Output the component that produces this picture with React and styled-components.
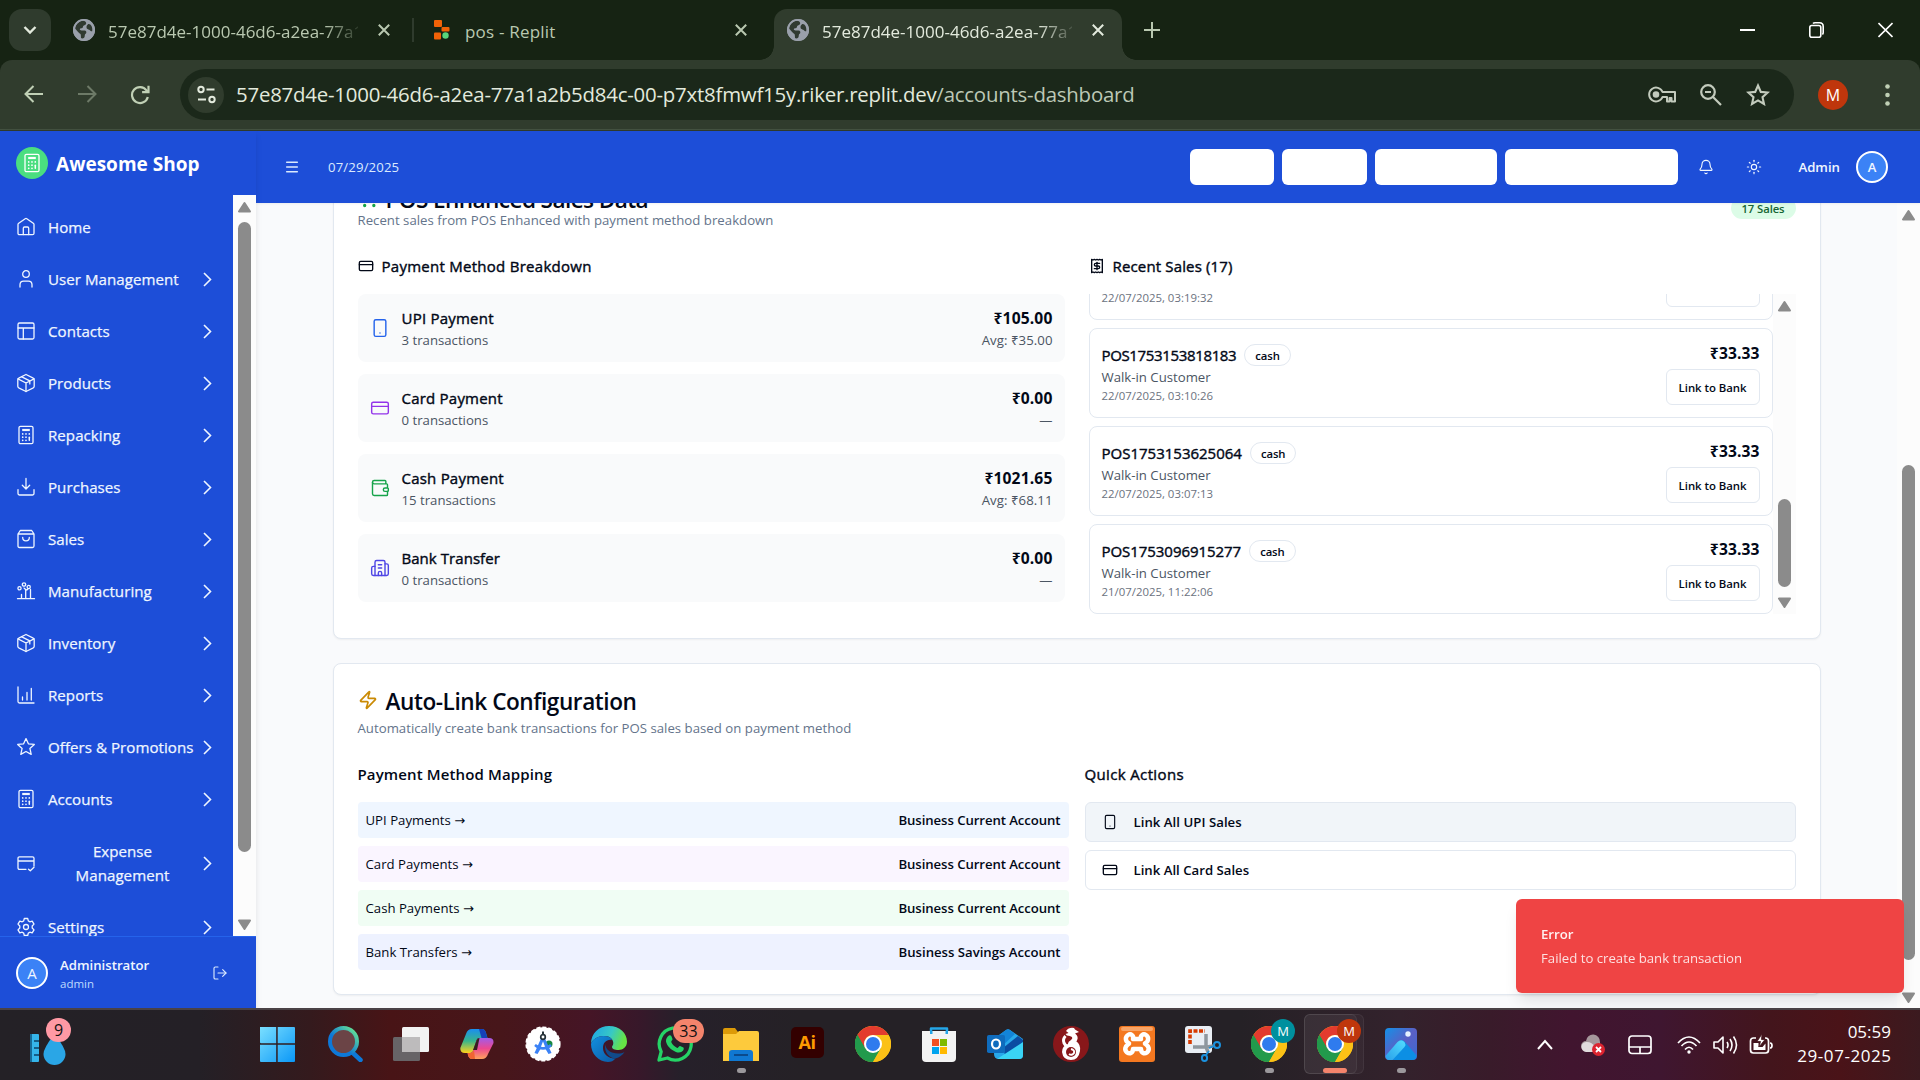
import React from "react";
import styled, { createGlobalStyle } from "styled-components";
import {
  Bell, Sun, Menu, CreditCard, Smartphone, Wallet, Building2, Zap, Receipt, ShoppingCart, LogOut,
} from "lucide-react";

const Global = createGlobalStyle`
  * { box-sizing: border-box; }
  html, body { margin: 0; padding: 0; overflow: hidden; }
  body { font-family: "Open Sans", "Noto Sans", sans-serif; color: #020817; }
  svg { display: block; flex: none; }
`;

const Screen = styled.div`
  width: 1920px;
  height: 1080px;
  display: flex;
  flex-direction: column;
  overflow: hidden;
`;

/* Weight 500 is drawn as the regular face with a thin stroke, since the family has no medium cut. */
const Text = styled.span`
  display: block;
  white-space: nowrap;
  font-size: ${(p) => p.$size || 13.2}px;
  line-height: ${(p) => p.$lh || 20}px;
  font-weight: ${(p) => (p.$weight === 500 ? 400 : p.$weight || 400)};
  -webkit-text-stroke: ${(p) => (p.$weight === 500 ? "0.4px currentColor" : "0")};
  color: ${(p) => p.$color || "#020817"};
  letter-spacing: ${(p) => (p.$ls !== undefined ? p.$ls : p.$weight === 500 ? 0.22 : 0)}px;
  margin-top: ${(p) => p.$dy || 0}px;
  margin-bottom: ${(p) => -(p.$dy || 0)}px;
`;

/* ---------- browser chrome ---------- */

const TabStrip = styled.div`
  height: 60px;
  flex: none;
  background: #162313;
  display: flex;
  align-items: center;
  padding-left: 9px;
`;

const TabSearch = styled.div`
  width: 42px;
  height: 42px;
  border-radius: 13px;
  background: #2f3b2d;
  display: grid;
  place-items: center;
`;

const Tab = styled.div`
  width: ${(p) => p.$width}px;
  height: 51px;
  margin-top: 9px;
  margin-left: ${(p) => p.$gap || 0}px;
  padding: 0 ${(p) => p.$end || 14}px 9px 13px;
  display: flex;
  align-items: center;
  border-radius: 13px 13px 0 0;
  background: ${(p) => (p.$active ? "#303c2d" : "transparent")};
  position: relative;
  color: ${(p) => (p.$active ? "#e3eadd" : "#b9c8b0")};
  ${(p) =>
    p.$active &&
    `&::before, &::after {
      content: "";
      position: absolute;
      bottom: 0;
      width: 14px;
      height: 14px;
    }
    &::before { left: -14px; background: radial-gradient(circle at 0 0, transparent 13.5px, #303c2d 14px); }
    &::after { right: -14px; background: radial-gradient(circle at 100% 0, transparent 13.5px, #303c2d 14px); }`}
`;

const TabTitle = styled.div`
  width: ${(p) => p.$width || 250}px;
  margin: 3px auto 0 ${(p) => p.$left || 13}px;
  overflow: hidden;
  white-space: nowrap;
  font-size: 17px;
  line-height: 24px;
  letter-spacing: ${(p) => p.$ls || 0}px;
  ${(p) => p.$fade && "mask-image: linear-gradient(90deg, #000 216px, transparent 256px);"}
`;

const TabDivider = styled.div`
  width: 2px;
  height: 24px;
  margin-left: 8px;
  background: #2f3b2d;
`;

const NewTab = styled.div`
  margin-left: 22px;
  flex: 1;
`;

const WindowButtons = styled.div`
  display: flex;
  gap: 54px;
  padding-right: 27px;
`;

const Toolbar = styled.div`
  height: 71px;
  flex: none;
  background: #303c2d;
  border-bottom: 1px solid #303a2c;
  box-shadow: inset 0 -1px 0 #435140;
  display: flex;
  align-items: center;
  padding: 0 24px 1px 22px;
`;

const ToolbarShell = styled.div`
  background: #162313;
  & > div { border-radius: 12px 12px 0 0; }
`;

const NavButtons = styled.div`
  display: flex;
  gap: 30px;
  width: 158px;
`;

const UrlBar = styled.div`
  width: 1614px;
  height: 51px;
  border-radius: 26px;
  background: #1b281a;
  display: flex;
  align-items: center;
  padding: 0 24px 0 8px;
`;

const SiteInfo = styled.div`
  width: 36px;
  height: 36px;
  border-radius: 50%;
  background: #303c2d;
  display: grid;
  place-items: center;
`;

const Url = styled.div`
  flex: 1;
  margin: -2px 0 0 12px;
  font-size: 20.4px;
  line-height: 28px;
  white-space: nowrap;
  letter-spacing: -0.21px;
  color: #e3eadd;
  & > span { color: #bdc8b6; }
`;

const UrlIcons = styled.div`
  display: flex;
  align-items: center;
  gap: 24px;
`;

const Profile = styled.div`
  width: 30px;
  height: 30px;
  margin: 0 37px 0 24px;
  border-radius: 50%;
  background: #bf360c;
  color: #fff;
  font-size: 16px;
  line-height: 30px;
  text-align: center;
`;

/* ---------- app shell ---------- */

const AppArea = styled.div`
  height: 877px;
  flex: none;
  display: flex;
  background: #f9fafc;
`;

const Sidebar = styled.aside`
  width: 256px;
  flex: none;
  display: flex;
  flex-direction: column;
  background: #1d4ed8;
  position: relative;
  z-index: 1;
  box-shadow: 0 4px 6px rgba(0, 0, 0, 0.1);
`;

const Brand = styled.div`
  height: 64px;
  display: flex;
  align-items: center;
  gap: 8px;
  padding-left: 16px;
`;

const BrandMark = styled.div`
  width: 32px;
  height: 32px;
  border-radius: 50%;
  background: #4ade80;
  color: #fff;
  display: grid;
  place-items: center;
`;

const NavFrame = styled.div`
  height: 741px;
  display: flex;
  overflow: hidden;
`;

const NavList = styled.nav`
  width: 233px;
  padding-top: 8px;
  display: flex;
  flex-direction: column;
  gap: 4px;
`;

const NavRow = styled.div`
  height: ${(p) => (p.$tall ? 72 : 48)}px;
  flex: none;
  display: flex;
  align-items: center;
  padding: 0 16px;
  color: #eff6ff;
`;

const NavLabel = styled.span`
  flex: 1;
  margin-left: 12px;
  margin-right: -8px;
  padding-right: ${(p) => (p.$center ? 8 : 0)}px;
  font-size: 15.1px;
  line-height: 24px;
  -webkit-text-stroke: 0.25px currentColor;
  letter-spacing: 0.04px;
  white-space: ${(p) => (p.$center ? "pre-line" : "nowrap")};
  text-align: ${(p) => (p.$center ? "center" : "left")};
`;

const Chevron = styled.span`
  width: 20px;
  display: grid;
  place-items: center;
`;

const Track = styled.div`
  width: 23px;
  flex: none;
  padding: 6px 0 ${(p) => p.$bottom || 5}px;
  background: #fcfcfc;
  display: flex;
  flex-direction: column;
  align-items: center;
`;

const Thumb = styled.div`
  width: 13px;
  height: ${(p) => p.$height}px;
  margin-top: ${(p) => p.$top}px;
  margin-bottom: auto;
  border-radius: 7px;
  background: #8b8b8b;
`;

const Account = styled.div`
  height: 72px;
  display: flex;
  align-items: center;
  padding: 0 28px 0 16px;
  border-top: 1px solid #2563eb;
`;

const AccountName = styled.div`
  flex: 1;
  margin-left: 12px;
  padding-top: 1px;
`;

const Avatar = styled.div`
  width: 32px;
  height: 32px;
  border: 2px solid #fff;
  border-radius: 50%;
  background: #3b82f6;
  color: #eff6ff;
  font-size: ${(p) => p.$size || 13}px;
  font-weight: ${(p) => p.$weight || 600};
  line-height: 28px;
  text-align: center;
`;

const Body = styled.div`
  flex: 1;
  display: flex;
  flex-direction: column;
`;

const TopBar = styled.header`
  height: 72px;
  flex: none;
  background: #1d4ed8;
  display: flex;
  align-items: center;
  padding: 0 32px 0 28px;
  box-shadow: 0 1px 2px rgba(0, 0, 0, 0.06);
  position: relative;
`;

const TopLeft = styled.div`
  flex: 1;
  display: flex;
  align-items: center;
  gap: 28px;
`;

const Blanks = styled.div`
  display: flex;
  gap: 8px;
`;

const Blank = styled.div`
  width: ${(p) => p.$width}px;
  height: 36px;
  border-radius: 6px;
  background: #fff;
`;

const TopIcons = styled.div`
  display: flex;
  gap: 32px;
  margin: 0 36px 0 20px;
`;

const AdminName = styled(Text)`
  margin-right: 16px;
`;

const Scroller = styled.div`
  flex: 1;
  min-height: 0;
  display: flex;
`;

const Content = styled.main`
  width: 1641px;
  padding: 0 76.5px 13px;
  display: flex;
  flex-direction: column;
  justify-content: flex-end;
  gap: 24px;
  overflow: hidden;
`;

const Card = styled.section`
  flex: none;
  padding: 24px;
  border: 1px solid #e2e8f0;
  border-radius: 8px;
  background: #fff;
  box-shadow: 0 1px 2px rgba(0, 0, 0, 0.05);
`;

const CardHead = styled.div`
  display: flex;
  align-items: center;
  justify-content: space-between;
  margin-bottom: 24px;
`;

const CardTitle = styled.div`
  display: flex;
  align-items: center;
  gap: 8px;
  margin-bottom: ${(p) => p.$below || 0}px;
`;

const Pill = styled.span`
  height: 22px;
  padding: 0 ${(p) => (p.$outline ? 10 : 11)}px;
  border: ${(p) => (p.$outline ? "1px solid #e2e8f0" : "none")};
  border-radius: 11px;
  background: ${(p) => (p.$outline ? "#fff" : "#dcfce7")};
  color: ${(p) => (p.$outline ? "#020817" : "#166534")};
  font-size: 11.3px;
  font-weight: 600;
  line-height: ${(p) => (p.$outline ? 21 : 23)}px;
  letter-spacing: -0.1px;
`;

const Columns = styled.div`
  display: grid;
  grid-template-columns: 1fr 1fr;
  gap: ${(p) => p.$gap}px;
`;

const SubHead = styled.div`
  height: 24px;
  display: flex;
  align-items: center;
  gap: 8px;
  margin-bottom: 16px;
`;

const Stack = styled.div`
  display: flex;
  flex-direction: column;
  gap: ${(p) => p.$gap}px;
`;

const Method = styled.div`
  height: 68px;
  padding: 12px;
  border-radius: 8px;
  background: #f9fafb;
  display: flex;
  align-items: center;
  gap: 12px;
`;

const Grow = styled.div`
  flex: 1;
`;

const RightText = styled.div`
  display: flex;
  flex-direction: column;
  align-items: flex-end;
  gap: ${(p) => p.$gap || 0}px;
`;

const SalesFrame = styled.div`
  height: 320px;
  display: flex;
`;

const Sales = styled.div`
  flex: 1;
  height: 320px;
  overflow: hidden;
  display: flex;
  flex-direction: column;
  justify-content: flex-end;
  gap: 8px;
`;

const Sale = styled.div`
  height: 90px;
  flex: none;
  padding: 12px;
  border: 1px solid #e2e8f0;
  border-radius: 8px;
  display: flex;
  align-items: center;
  justify-content: space-between;
`;

const SaleName = styled.div`
  height: 24px;
  display: flex;
  align-items: center;
  gap: 8px;
`;

const BankButton = styled.div`
  width: 94px;
  height: 36px;
  border: 1px solid #e2e8f0;
  border-radius: 6px;
  display: flex;
  justify-content: center;
  padding-top: 9px;
`;

const MapRow = styled.div`
  height: 36px;
  padding: 0 8px;
  border-radius: 4px;
  background: ${(p) => p.$tint};
  display: flex;
  align-items: center;
  justify-content: space-between;
`;

const ArrowGlyph = styled.span`
  font-family: "DejaVu Sans", sans-serif;
  font-size: 13px;
  line-height: 1;
`;

const Action = styled.div`
  height: 40px;
  padding: 0 16px;
  border: 1px solid #e2e8f0;
  border-radius: 6px;
  background: ${(p) => (p.$hover ? "#f1f5f9" : "#fff")};
  display: flex;
  align-items: center;
  gap: 16px;
`;

const Toast = styled.div`
  position: fixed;
  left: 1516px;
  top: 899px;
  width: 388px;
  height: 94px;
  padding: 0 25px;
  display: flex;
  flex-direction: column;
  justify-content: center;
  gap: 4px;
  border-radius: 6px;
  background: #ef4444;
  box-shadow: 0 10px 15px -3px rgba(0, 0, 0, 0.1), 0 4px 6px -4px rgba(0, 0, 0, 0.1);
  z-index: 3;
`;

/* ---------- taskbar ---------- */

const Taskbar = styled.div`
  height: 72px;
  flex: none;
  position: relative;
  z-index: 4;
  border-top: 2px solid #4a4246;
  background: linear-gradient(90deg, #242126 0, #242026 200px, #341a1d 310px, #481416 390px, #47161a 500px,
    #451526 590px, #37182a 640px, #26202a 680px, #252126 800px, #252126 1240px, #33222c 1400px,
    #391b2a 1490px, #41152f 1570px, #3f1630 1660px, #43151c 1770px, #4a1318 1840px, #3b1a1f 1920px);
  display: flex;
  align-items: center;
`;

const Widget = styled.div`
  width: 244px;
  height: 70px;
  padding: 24px 0 0 30px;
`;

const TaskCell = styled.div`
  width: 66px;
  height: 70px;
  padding-top: 16px;
  display: flex;
  flex-direction: column;
  align-items: center;
  position: relative;
  &:nth-of-type(2) { margin-right: 2px; }
  &::after {
    content: "";
    position: absolute;
    bottom: 7px;
    width: ${(p) => (p.$state === "active" ? 24 : 9)}px;
    height: 5px;
    border-radius: 3px;
    background: ${(p) => (p.$state === "active" ? "#f4846c" : "#9b989c")};
    display: ${(p) => (p.$state ? "block" : "none")};
  }
  & > svg { position: relative; z-index: 1; }
`;

const ActiveTile = styled.div`
  position: absolute;
  top: 4px;
  left: 2px;
  width: ${(p) => p.$width}px;
  height: 60px;
  border-radius: 6px;
  background: rgba(255, 255, 255, 0.035);
  border: 1px solid rgba(255, 255, 255, 0.06);
`;

const Bubble = styled.div`
  position: absolute;
  z-index: 2;
  left: ${(p) => p.$left}px;
  top: ${(p) => p.$top}px;
  min-width: ${(p) => p.$width}px;
  height: 24px;
  border-radius: 12px;
  background: ${(p) => p.$bg};
  color: ${(p) => p.$color || "#111"};
  font-size: ${(p) => p.$size || 15}px;
  line-height: 24px;
  text-align: center;
`;

const Tray = styled.div`
  flex: 1;
  display: flex;
  align-items: center;
  padding-left: 103px;
`;

const Gap = styled.div`
  flex: none;
  margin-left: ${(p) => p.$left}px;
`;

const Clock = styled.div`
  margin-left: auto;
  margin-top: -2px;
  padding-right: 29px;
  text-align: right;
  color: #fff;
  font-size: 17px;
  line-height: 24px;
`;

const DateLine = styled.div`
  letter-spacing: 0.55px;
  margin-right: -0.5px;
`;

/* ---------- drawings ---------- */

const CloseX = ({ size = 12, w = 2 }) => (
  <svg width={size} height={size} viewBox="0 0 12 12" stroke="currentColor" strokeWidth={w} fill="none">
    <path d="M.8.8 11.2 11.2M11.2.8.8 11.2" />
  </svg>
);

const Globe = () => (
  <svg width="22" height="22" viewBox="0 0 22 22">
    <circle cx="11" cy="11" r="11" fill="#9aa0ab" />
    <path d="M10 1.8c2 .3 3 1 3.2 2.2.2 1.500-1.500 2-2.700 2.700-.8.6-.3 1.700-1.200 2.300-.8.500-2 .1-2.400 1-.3 1 .600 1.400 1.700 1.400h3.200c1.200.1 1.600 1.100 1.500 2.100 0 1-1.100 1.300-1.400 2.200-.3 1.200.100 2-.8 3.100-1.300 1.200-2.600.6-3.100.3l-.200-3.300c-.2-1.300-1.700-1.500-2.400-2.500C4.600 12 3 11 2.200 9.400 2.800 5.500 6 2.200 10 1.800z" fill="#303a31" />
    <path d="M15 5.200c1.400-.5 2.700.3 3.500 1.800.8 1.700 1 3.600.7 5.300-1.400.2-2-1-3-1.600-1.100-.7-2.200-.6-2.600-1.800-.3-1.400.3-3.100 1.400-3.700z" fill="#303a31" />
    <circle cx="11" cy="11" r="10.200" fill="none" stroke="#9aa0ab" strokeWidth="1.500" />
  </svg>
);

const line = { fill: "none", stroke: "currentColor", strokeWidth: 1.3, strokeLinecap: "round", strokeLinejoin: "round" };

const Calc = ({ size = 20 }) => (
  <svg width={size} height={size} viewBox="0 0 20 20" {...line}>
    <rect x="3" y="1.300" width="14" height="17.400" rx="1.500" />
    <path d="M6.200 5h7.600" strokeWidth="2.200" strokeLinecap="butt" />
    <path d="M6.700 8.900h0M10 8.900h0M13.300 8.900h0M6.700 12.200h0M10 12.200h0M6.700 15.300h0M10 15.300h0" strokeWidth="1.700" />
    <path d="M13.300 12.200v3.100" strokeWidth="1.500" />
  </svg>
);

const Box = () => (
  <svg width="20" height="20" viewBox="0 0 20 20" {...line}>
    <path d="M10 1.500 17.300 5.200q.9.500.9 1.500v6.600q0 1-.9 1.500L10 18.500l-7.300-3.700q-.9-.5-.9-1.500V6.700q0-1 .9-1.500z" />
    <path d="M2 5.800 10 10l8-4.200M10 10v8.500M5.800 3.800l8 4.100v3" />
  </svg>
);

const navIcons = {
  home: (
    <svg width="20" height="20" viewBox="0 0 20 20" {...line}>
      <path d="M2 7.600q0-.8.700-1.300L9.200 1.700q.8-.5 1.600 0l6.500 4.600q.7.500.7 1.300v8.600q0 1.500-1.500 1.500h-13Q2 17.700 2 16.200z" />
      <path d="M7.300 17.500v-6.200q0-1.300 1.200-1.300h3q1.200 0 1.200 1.300v6.200" />
    </svg>
  ),
  user: (
    <svg width="20" height="20" viewBox="0 0 20 20" {...line}>
      <circle cx="10" cy="5" r="3.300" />
      <path d="M4 18v-2.200q0-3.600 3.600-3.600h4.800q3.600 0 3.600 3.600V18" />
    </svg>
  ),
  layout: (
    <svg width="20" height="20" viewBox="0 0 20 20" {...line}>
      <rect x="2" y="2" width="16" height="16" rx="1.500" />
      <path d="M2 7h16M7.300 7v11" />
    </svg>
  ),
  box: <Box />,
  calc: <Calc />,
  download: (
    <svg width="20" height="20" viewBox="0 0 20 20" {...line}>
      <path d="M10 1.500v10.300M6.300 8.300l3.700 3.700 3.700-3.700M2 12.600v4q0 1.400 1.400 1.400h13.200q1.400 0 1.400-1.400v-4" />
    </svg>
  ),
  bag: (
    <svg width="20" height="20" viewBox="0 0 20 20" {...line}>
      <path d="M4.300 1.500h11.400L18 5v12q0 1.500-1.500 1.500h-13Q2 18.500 2 17V5zM2 5h16" />
      <path d="M6.700 8.500q0 3.300 3.300 3.300t3.300-3.300" />
    </svg>
  ),
  factory: (
    <svg width="20" height="20" viewBox="0 0 20 20" {...line}>
      <circle cx="3.500" cy="7.300" r="1.600" /><circle cx="8" cy="3.500" r="1.700" /><circle cx="12.700" cy="6" r="1.600" />
      <path d="M1.500 17.700h17M5.500 17.500v-4M9.700 17.500V9.500q0-1.500-1.700-2.500M14.500 17.500V8.500M9.700 9.500q1-1 2-1" />
    </svg>
  ),
  chart: (
    <svg width="20" height="20" viewBox="0 0 20 20" {...line}>
      <path d="M2 2v14.500Q2 18 3.500 18H18M6.500 15v-3M11 15V7.500M15.300 15V3.500" />
    </svg>
  ),
  star: (
    <svg width="20" height="20" viewBox="0 0 20 20" {...line}>
      <path d="m10 1.600 2.400 5.200 5.900.6-4.400 4 1.300 6-5.200-2.900-5.200 2.900 1.300-6-4.400-4 5.900-.6z" />
    </svg>
  ),
  expense: (
    <svg width="20" height="20" viewBox="0 0 20 20" {...line}>
      <path d="M10 16.300H3.500Q2 16.300 2 14.800V5.300q0-1.500 1.500-1.500h13q1.500 0 1.500 1.500V13M2 8h16M12.500 16.200l1.800 1.600 3.700-3.500" />
    </svg>
  ),
  gear: (
    <svg width="20" height="20" viewBox="0 0 20 20" {...line}>
      <path d="m8.300 1.500h3.400l.6 2.400 1.500.9 2.400-.7 1.800 3-1.800 1.900v2l1.800 1.900-1.800 3-2.400-.7-1.500.9-.6 2.400H8.300l-.6-2.400-1.500-.9-2.400.7-1.800-3 1.800-1.900V9L2 7.100l1.800-3 2.400.7 1.500-.9z" />
      <circle cx="10" cy="10" r="2.500" />
    </svg>
  ),
};

const Arrow = ({ down }) => (
  <svg width="15" height="12" viewBox="0 0 15 12">
    <path d={down ? "M2 1.500h11L7.500 10z" : "M2 10.500h11L7.500 2z"} fill="#8b8b8b" stroke="#8b8b8b" strokeWidth="2" strokeLinejoin="round" />
  </svg>
);

const ChromeLogo = () => (
  <svg width="36" height="36" viewBox="0 0 36 36">
    <circle cx="18" cy="18" r="18" fill="#fbc116" />
    <path d="M18 18 2.400 9a18 18 0 0 0 15.600 27l7.800-13.500z" fill="#229a4c" />
    <path d="M18 9h15.600A18 18 0 0 1 18 36l7.800-13.500z" fill="#fbc116" />
    <path d="M2.400 9A18 18 0 0 1 33.600 9H18a9 9 0 0 0-8.500 6l.7 7.500z" fill="#e33b2e" />
    <path d="M2.400 9 10.200 22.500 18 27l-2 8.900A18 18 0 0 1 2.400 9z" fill="#229a4c" />
    <circle cx="18" cy="18" r="9" fill="#fff" />
    <circle cx="18" cy="18" r="7" fill="#2f7bee" />
  </svg>
);

const taskIcons = {
  windows: (
    <svg width="36" height="36" viewBox="0 0 36 36">
      <defs><linearGradient id="win" x1="0" y1="0" x2="1" y2="1"><stop stopColor="#7adfff" /><stop offset="1" stopColor="#0a97f7" /></linearGradient></defs>
      <path d="M1 1h16.200v16.200H2q-1 0-1-1zM18.700 1H35q1 0 1 1v15.200H18.700zM1 18.800h16.200V36H2q-1 0-1-1zM18.700 18.800H36V35q0 1-1 1H18.700z" fill="url(#win)" />
    </svg>
  ),
  search: (
    <svg width="36" height="36" viewBox="0 0 36 36">
      <defs><linearGradient id="sr" x1="0" y1="1" x2="1" y2="0"><stop offset=".4" stopColor="#0d78d8" /><stop offset="1" stopColor="#6ff08c" /></linearGradient></defs>
      <path d="m26 27 7.500 7" stroke="#0d78d8" strokeWidth="4.500" strokeLinecap="round" />
      <circle cx="16.500" cy="15.500" r="13.500" fill="#6b4446" stroke="url(#sr)" strokeWidth="4" />
    </svg>
  ),
  taskview: (
    <svg width="36" height="36" viewBox="0 0 36 36">
      <rect x="0" y="11" width="27" height="24" rx="1.500" fill="#676467" />
      <rect x="9" y="1" width="27" height="25" rx="1.500" fill="#f2f2f2" />
      <path d="M9 11h18v15H9z" fill="#bdbbbc" />
    </svg>
  ),
  copilot: (
    <svg width="36" height="36" viewBox="0 0 36 36">
      <defs>
        <linearGradient id="cpa" x1="0" y1="0" x2="0" y2="1"><stop stopColor="#1a8ef0" /><stop offset=".5" stopColor="#38b58c" /><stop offset="1" stopColor="#ffd21a" /></linearGradient>
        <linearGradient id="cpb" x1="0" y1="1" x2="0" y2="0"><stop stopColor="#ffa35c" /><stop offset=".5" stopColor="#ec4890" /><stop offset="1" stopColor="#a25be8" /></linearGradient>
      </defs>
      <path d="M13 3h10q3 0 4 4l1.500 5h-6l-2 0q-2.300 0-3 2l-3 10q-1 3-3 3H6q-5 0-4.700-5L7 8q1.500-5 6-5z" fill="url(#cpa)" />
      <path d="M20 3h3q3 0 4 4l1.500 5h-6z" fill="#1540b8" />
      <path d="M23 33H13q-3 0-4-4l-.6-2h2q3 0 4-3l3.500-10q.8-2 3-2H30q5 0 4.500 5L29 28q-1.500 5-6 5z" fill="url(#cpb)" />
      <path d="M9 27h2q3 0 4-3l1 9h-3q-3 0-4-4z" fill="#f06533" />
      <path d="M17.800 14q.8-2 2.700-2L18 24h-4z" fill="#361e20" />
    </svg>
  ),
  studio: (
    <svg width="36" height="36" viewBox="0 0 36 36">
      <circle cx="18" cy="18" r="16.800" fill="#fff" stroke="#fff" strokeWidth="1.600" strokeDasharray="4 2" />
      <circle cx="24" cy="18" r="3.500" fill="#178843" />
      <path d="M16 12.500h4L26.500 27l-3 1-3-5h-5l-3 5-3-1z" fill="#3b82f6" />
      <path d="M18 15.500 15.800 21h4.400z" fill="#fff" />
      <path d="M10 19q8 7 16 0" fill="none" stroke="#3b82f6" strokeWidth="2.500" />
      <path d="M18 5.500V9" stroke="#263238" strokeWidth="2" />
      <circle cx="18" cy="11" r="2.300" fill="#fff" stroke="#263238" strokeWidth="1.700" />
    </svg>
  ),
  edge: (
    <svg width="36" height="36" viewBox="0 0 36 36">
      <defs>
        <linearGradient id="eda" x1="0" y1="0" x2="1" y2=".3"><stop stopColor="#1ba3e8" /><stop offset=".6" stopColor="#38c8c5" /><stop offset="1" stopColor="#66e345" /></linearGradient>
        <linearGradient id="edb" x1="0" y1="0" x2="1" y2="1"><stop stopColor="#1290e0" /><stop offset="1" stopColor="#0b59a4" /></linearGradient>
      </defs>
      <path d="M0 18C0 7 8 0 18 0c11 0 18 7.500 18 15.500 0 5.500-4 8.500-8.500 8.500-4 0-6.500-1.300-6.500-3 0-1.200 1.300-1.500 1.300-4C22.300 13.500 19 10 13.500 10 6.500 10 1.500 13.500 0 18z" fill="url(#eda)" />
      <path d="M0 18c1.500-5 7-8 12.500-8 4.500 0 7.500 1.500 8.800 4-6-1-9.300 3-9.300 8 0 6.500 6 11 12.500 10.500C22.500 35 20 36 17 36 7.500 35.500 0 28 0 18z" fill="url(#edb)" />
      <path d="M14.500 18c-2.500 8 5 15 10 14.500 4-.8 7-3.500 9-6.500-3.500 2-8 2-11.500.8C17.500 25.500 14.200 22 14.500 18z" fill="#114a8b" />
    </svg>
  ),
  whatsapp: (
    <svg width="36" height="36" viewBox="0 0 36 36">
      <path d="M2 34l2.200-8.300A16 16 0 1 1 10.500 32z" fill="none" stroke="#25d366" strokeWidth="3.300" strokeLinejoin="round" />
      <path d="M12 9.500c1-.6 1.900-.3 2.300.6l1.200 2.900c.3.700-1.600 2.500-1.300 3.100 1.300 2.700 3.300 4.600 6 5.800.7.300 2.100-2.300 2.900-2l3.300 1.700c.6.300.4 2.100-.3 3-1.500 2-4.500 2.300-7.200 1.300-5-1.800-9-6-9.900-10.300-.4-2.200 1.300-5.100 3-6.100z" fill="#25d366" />
    </svg>
  ),
  explorer: (
    <svg width="36" height="36" viewBox="0 0 36 36">
      <path d="M0 4q0-2 2-2h10l3 4v6H0z" fill="#dc9a08" />
      <path d="M0 8h13l3-3h18q2 0 2 2v28H0z" fill="#fdca3c" />
      <path d="M6 35V27q0-3 3-3h18q3 0 3 3v8z" fill="#1078d2" />
      <path d="M11 29h14" stroke="#0b4a8c" strokeWidth="2" />
    </svg>
  ),
  chrome: <ChromeLogo />,
  store: (
    <svg width="36" height="36" viewBox="0 0 36 36">
      <path d="M10 8V2.500h16V8" fill="none" stroke="#24a6e8" strokeWidth="2.500" strokeLinejoin="round" />
      <path d="M1 5h34v27q0 4-4 4H5q-4 0-4-4z" fill="#f3f3f3" />
      <path d="M9 5h2.500v3H9zM24.500 5H27v3h-2.500z" fill="#24a6e8" />
      <path d="M11 13h7v7h-7z" fill="#f25022" /><path d="M19 13h7v7h-7z" fill="#7fba00" />
      <path d="M11 21h7v7h-7z" fill="#00a4ef" /><path d="M19 21h7v7h-7z" fill="#ffb900" />
    </svg>
  ),
  outlook: (
    <svg width="36" height="36" viewBox="0 0 36 36">
      <path d="M8 12 19 4q2-1.500 4 0l13 9v16q0 4-4 4H12q-5 0-5-5z" fill="#28a8ea" />
      <path d="m8 12 11-8q2-1.500 4 0l5 4-14 13z" fill="#1384d8" />
      <path d="M16 22 31 10l5 4v4L18 29z" fill="#0b4da2" />
      <path d="m36 16-26 17h22q4 0 4-4z" fill="#3ad4f5" />
      <rect x="0" y="9" width="18" height="18" rx="1.800" fill="#0f6cbd" />
      <ellipse cx="9" cy="18" rx="4" ry="4.500" fill="none" stroke="#fff" strokeWidth="2.200" />
    </svg>
  ),
  wireguard: (
    <svg width="36" height="36" viewBox="0 0 36 36">
      <circle cx="18" cy="18" r="18" fill="#88171a" />
      <path d="M13 5q3-4 8-3l1 1.500 4 2.500-4 1.500q4 3 2 7-2 3-6 4.500-3 1-3-1.500 0-2 3-3.500 2-1.500 1-3-2-1.500-5-1.500l-1.500-1.500 3-1z" fill="#fff" />
      <path d="M12.500 10q-3 3-1.500 7 2 4 7 5" fill="none" stroke="#fff" strokeWidth="3" />
      <path d="M23 15q5 3.500 4 10-1.500 9-9 9-8 0-9-8 0-6 6-8 4-1 8-3z" fill="#fff" />
      <circle cx="18" cy="26" r="5" fill="#88171a" />
      <path d="M18 23q4 1 3 4-2 3-5 1" fill="none" stroke="#fff" strokeWidth="2" />
    </svg>
  ),
  xampp: (
    <svg width="36" height="36" viewBox="0 0 36 36">
      <rect width="36" height="36" rx="3" fill="#f47820" /><rect x="2" y="1" width="32" height="4" rx="2" fill="#f8a567" />
      <path d="M9 9c3-2 6 1 5 4M14 13h8M22 13c-1-3 2-6 5-4M9 9c-3 2-3 6 1 8.500M27 9c3 2 3 6-1 8.500M10 17.500c-4 3-5 6-2 9M26 17.500c4 3 5 6 2 9M8 26.500c3 2 6 0 6-3.500M28 26.500c-3 2-6 0-6-3.500M14 23h8" fill="none" stroke="#fff" strokeWidth="4.500" strokeLinecap="round" />
    </svg>
  ),
  snip: (
    <svg width="36" height="36" viewBox="0 0 36 36">
      <rect x="0" y="0" width="27" height="27" rx="3" fill="#e9eef4" />
      <path d="M5 18V5h15" fill="none" stroke="#d83b01" strokeWidth="3.600" strokeDasharray="4 1.500" />
      <path d="M21 8v13l2 5M8 21h14l6-1" fill="none" stroke="#8e979e" strokeWidth="3.500" />
      <circle cx="32" cy="19" r="3" fill="none" stroke="#1b92df" strokeWidth="2" />
      <ellipse cx="19.500" cy="32" rx="2.600" ry="3" fill="none" stroke="#1b92df" strokeWidth="2" />
      <path d="m21 29 3-4M29 20l-5 2" stroke="#1b92df" strokeWidth="1.800" />
    </svg>
  ),
  photos: (
    <svg width="32" height="36" viewBox="0 0 32 36">
      <defs>
        <linearGradient id="ph" x1="0" y1="0" x2="1" y2="1"><stop stopColor="#1391e8" /><stop offset=".5" stopColor="#5a60c5" /><stop offset="1" stopColor="#3a6ad0" /></linearGradient>
        <linearGradient id="pm" x1="1" y1="0" x2="0" y2="1"><stop stopColor="#52dcff" /><stop offset="1" stopColor="#2aa0ea" /></linearGradient>
      </defs>
      <rect y="2" width="32" height="32" rx="4" fill="url(#ph)" />
      <path d="M16 14q2.500 0 4 2l11.500 13.500Q31 34 27 34H8z" fill="#0c8fe4" />
      <path d="M.4 30 12.500 16q3.500-3.500 7 0 1.800 2.500 0 5L7.500 34H4Q1 34 .4 30z" fill="url(#pm)" />
      <circle cx="23" cy="8" r="2.700" fill="#e6f2ff" />
    </svg>
  ),
};

const nav = [
  ["home", "Home"], ["user", "User Management"], ["layout", "Contacts"], ["box", "Products"], ["calc", "Repacking"],
  ["download", "Purchases"], ["bag", "Sales"], ["factory", "Manufacturing"], ["box", "Inventory"], ["chart", "Reports"],
  ["star", "Offers & Promotions"], ["calc", "Accounts"], ["expense", "Expense\nManagement"], ["gear", "Settings"],
];

const methods = [
  [Smartphone, "#2563eb", "UPI Payment", "3 transactions", "₹105.00", "Avg: ₹35.00"],
  [CreditCard, "#9333ea", "Card Payment", "0 transactions", "₹0.00", "—"],
  [Wallet, "#16a34a", "Cash Payment", "15 transactions", "₹1021.65", "Avg: ₹68.11"],
  [Building2, "#4f46e5", "Bank Transfer", "0 transactions", "₹0.00", "—"],
];

const sales = [
  ["POS1753154372195", "22/07/2025, 03:19:32", 0],
  ["POS1753153818183", "22/07/2025, 03:10:26", -0.35],
  ["POS1753153625064", "22/07/2025, 03:07:13", 0],
  ["POS1753096915277", "21/07/2025, 11:22:06", -0.05],
];

const mappings = [
  ["#eff6ff", "UPI Payments", "Business Current Account"],
  ["#faf5ff", "Card Payments", "Business Current Account"],
  ["#f0fdf4", "Cash Payments", "Business Current Account"],
  ["#eef2ff", "Bank Transfers", "Business Savings Account"],
];

const tasks = [
  ["windows"], ["search"], ["taskview"], ["copilot"], ["studio"], ["edge"], ["whatsapp"], ["explorer", "open"], ["ai"],
  ["chrome"], ["store"], ["outlook"], ["wireguard"], ["xampp"], ["snip"], ["chrome", "open", "M", "#00909e"],
  ["chrome", "active", "M", "#bf360c"], ["photos", "open"],
];

const AiTile = styled.div`
  width: 33px;
  height: 31px;
  margin-top: 1px;
  border-radius: 5px;
  background: #330000;
  color: #ff9a00;
  font-size: 18px;
  font-weight: 700;
  line-height: 30px;
  text-align: center;
  letter-spacing: -0.5px;
`;

function Browser() {
  return (
    <>
      <TabStrip>
        <TabSearch>
          <svg width="14" height="10" viewBox="0 0 14 10" fill="none" stroke="#e3eadd" strokeWidth="2.400"><path d="m1.500 2 5.500 5.500L12.500 2" /></svg>
        </TabSearch>
        <Tab $width={344} $gap={9}>
          <Globe /><TabTitle $fade>57e87d4e-1000-46d6-a2ea-77a1a2b5</TabTitle><CloseX />
        </Tab>
        <TabDivider />
        <Tab $width={346} $gap={7} $end={20}>
          <svg width="16" height="20" viewBox="0 0 16 20" fill="#f26207"><rect y="0" width="8" height="7" rx="1" /><rect x="7.500" y="7" width="8" height="4.500" rx="1" /><rect y="12.500" width="7" height="7" rx="1" /><circle cx="11.500" cy="15.500" r="3.200" fill="#58d67b" /></svg>
          <TabTitle $left={15} $ls={0.2}>pos - Replit</TabTitle><CloseX />
        </Tab>
        <Tab $width={348} $gap={7} $end={18} $active>
          <Globe /><TabTitle $fade>57e87d4e-1000-46d6-a2ea-77a1a2b5</TabTitle><CloseX />
        </Tab>
        <NewTab>
          <svg width="16" height="16" viewBox="0 0 16 16" stroke="#b9c8b0" strokeWidth="2"><path d="M8 0v16M0 8h16" /></svg>
        </NewTab>
        <WindowButtons>
          <svg width="15" height="16" viewBox="0 0 15 16" stroke="#fff" strokeWidth="2"><path d="M0 8h15" /></svg>
          <svg width="15" height="16" viewBox="0 0 15 16" stroke="#fff" strokeWidth="1.600" fill="none"><rect x=".8" y="3.500" width="11" height="11.700" rx="2" /><path d="M4 1.500Q4.600.8 6 .8h4.500q3.700 0 3.700 3.700v6q0 1.200-.8 2" /></svg>
          <svg width="15" height="16" viewBox="0 0 15 16" stroke="#fff" strokeWidth="1.600"><path d="m.5 1 14 14M14.500 1l-14 14" /></svg>
        </WindowButtons>
      </TabStrip>
      <ToolbarShell>
        <Toolbar>
          <NavButtons>
            {[["#c0d0b5", "M20 9H3M10.500 1 2.500 9l8 8"], ["#6d7a67", "M1 9h17M10.500 1l8 8-8 8"]].map(([c, d]) => (
              <svg key={c} width="24" height="18" viewBox="-1 0 24 18" fill="none" stroke={c} strokeWidth="2"><path d={d} /></svg>
            ))}
            <svg width="20" height="20" viewBox="0 0 20 20" fill="none" stroke="#c0d0b5" strokeWidth="2.200"><path d="M17.800 12A8 8 0 1 1 16.500 5.300L18 7" /><path d="M18.500.8v6.400h-6.400" /></svg>
          </NavButtons>
          <UrlBar>
            <SiteInfo>
              <svg width="19" height="19" viewBox="0 0 19 19" fill="none" stroke="#e3eadd" strokeWidth="2"><circle cx="4" cy="4.500" r="2.700" /><path d="M9.500 4.500h8M1 14.500h8" /><circle cx="15" cy="14.500" r="2.700" /></svg>
            </SiteInfo>
            <Url>57e87d4e-1000-46d6-a2ea-77a1a2b5d84c-00-p7xt8fmwf15y.riker.replit.dev<span>/accounts-dashboard</span></Url>
            <UrlIcons>
              <svg width="28" height="17" viewBox="0 0 28 17" fill="none" stroke="#c3cbbd" strokeWidth="2"><path d="M14.500 6A6.900 6.900 0 1 0 14.500 11H19v4.500h2.500V12h2v3.500H27V6z" strokeLinejoin="round" /><circle cx="8" cy="8.500" r="2.300" fill="#c3cbbd" /></svg>
              <svg width="22" height="22" viewBox="0 0 22 22" fill="none" stroke="#c3cbbd" strokeWidth="2.200"><circle cx="8" cy="8" r="6.800" /><path d="m13 13 8 8M5 8h6" /></svg>
              <svg width="24" height="23" viewBox="0 0 24 23" fill="none" stroke="#c3cbbd" strokeWidth="2.100"><path d="m12 2.500 2.800 6.400 6.900.6-5.200 4.600 1.500 6.900-6-3.600L6 21l1.500-6.900L2.300 9.500l6.900-.6z" /></svg>
            </UrlIcons>
          </UrlBar>
          <Profile>M</Profile>
          <svg width="5" height="22" viewBox="0 0 5 22" fill="#c0d0b5"><circle cx="2.500" cy="2.500" r="2.300" /><circle cx="2.500" cy="11" r="2.300" /><circle cx="2.500" cy="19.500" r="2.300" /></svg>
        </Toolbar>
      </ToolbarShell>
    </>
  );
}

function Side() {
  return (
    <Sidebar>
      <Brand>
        <BrandMark><Calc size={20} /></BrandMark>
        <Text $size={19} $weight={700} $lh={28} $color="#fff" $ls={0.02} $dy={1}>Awesome Shop</Text>
      </Brand>
      <NavFrame>
        <NavList>
          {nav.map(([icon, label]) => {
            const tall = label.includes("\n");
            return (
              <NavRow key={label} $tall={tall}>
                {navIcons[icon]}
                <NavLabel $center={tall}>{label}</NavLabel>
                {label !== "Home" && (
                  <Chevron>
                    <svg width="9" height="15" viewBox="0 0 9 15" fill="none" stroke="currentColor" strokeWidth="1.600"><path d="m1 1 6.500 6.500L1 14" /></svg>
                  </Chevron>
                )}
              </NavRow>
            );
          })}
        </NavList>
        <Track><Arrow /><Thumb $height={630} $top={9} /><Arrow down /></Track>
      </NavFrame>
      <Account>
        <Avatar $size={15} $weight={400}>A</Avatar>
        <AccountName>
          <Text $weight={600} $color="#eff6ff">Administrator</Text>
          <Text $size={11.5} $lh={16} $color="#bfdbfe" $dy={1}>admin</Text>
        </AccountName>
        <LogOut size={16} strokeWidth={1.700} color="#dbeafe" />
      </Account>
    </Sidebar>
  );
}

function SalesCard() {
  return (
    <Card>
      <CardHead>
        <div>
          <CardTitle>
            <ShoppingCart size={20} color="#16a34a" />
            <Text $size={22.6} $weight={600} $lh={24} $ls={-0.6} $dy={2}>POS Enhanced Sales Data</Text>
          </CardTitle>
          <Text $color="#64748b" $ls={0.02}>Recent sales from POS Enhanced with payment method breakdown</Text>
        </div>
        <Pill>17 Sales</Pill>
      </CardHead>
      <Columns $gap={24}>
        <div>
          <SubHead><CreditCard size={16} /><Text $size={15} $weight={500} $lh={24} $ls={0.27}>Payment Method Breakdown</Text></SubHead>
          <Stack $gap={12}>
            {methods.map(([Icon, color, name, count, amount, avg]) => (
              <Method key={name}>
                <Icon size={20} color={color} strokeWidth={1.700} />
                <Grow>
                  <Text $size={15} $weight={500} $lh={24} $ls={name === "Bank Transfer" ? 0.05 : 0.22}>{name}</Text>
                  <Text $color="#4b5563">{count}</Text>
                </Grow>
                <RightText>
                  <Text $size={15.6} $weight={700} $lh={24} $ls={0.15}>{amount}</Text>
                  <Text $color="#4b5563" $ls={0.06}>{avg}</Text>
                </RightText>
              </Method>
            ))}
          </Stack>
        </div>
        <div>
          <SubHead><Receipt size={16} /><Text $size={15} $weight={500} $lh={24} $ls={0.15}>Recent Sales (17)</Text></SubHead>
          <SalesFrame>
            <Sales>
              {sales.map(([id, date, spacing]) => (
                <Sale key={id}>
                  <div>
                    <SaleName><Text $size={15} $weight={500} $lh={24} $ls={spacing}>{id}</Text><Pill $outline>cash</Pill></SaleName>
                    <Text $color="#4b5563">Walk-in Customer</Text>
                    <Text $size={11.4} $lh={16} $color="#6b7280" $dy={1}>{date}</Text>
                  </div>
                  <RightText $gap={4}>
                    <Text $size={15.6} $weight={700} $lh={24} $ls={0.1}>₹33.33</Text>
                    <BankButton><Text $size={11.4} $weight={600} $lh={18} $ls={-0.05}>Link to Bank</Text></BankButton>
                  </RightText>
                </Sale>
              ))}
            </Sales>
            <Track><Arrow /><Thumb $height={88} $top={187} /><Arrow down /></Track>
          </SalesFrame>
        </div>
      </Columns>
    </Card>
  );
}

function ConfigCard() {
  return (
    <Card>
      <CardHead>
        <div>
          <CardTitle $below={6}>
            <Zap size={20} color="#ca8a04" />
            <Text $size={22.6} $weight={600} $lh={24} $ls={-0.44} $dy={2}>Auto-Link Configuration</Text>
          </CardTitle>
          <Text $color="#64748b" $ls={0.02}>Automatically create bank transactions for POS sales based on payment method</Text>
        </div>
      </CardHead>
      <Columns $gap={16}>
        <div>
          <SubHead><Text $size={15} $weight={600} $lh={24} $ls={0.13}>Payment Method Mapping</Text></SubHead>
          <Stack $gap={8}>
            {mappings.map(([tint, from, to]) => (
              <MapRow key={from} $tint={tint}>
                <Text>{from} <ArrowGlyph>→</ArrowGlyph></Text>
                <Text $weight={600} $ls={to.includes("Savings") ? -0.02 : -0.08}>{to}</Text>
              </MapRow>
            ))}
          </Stack>
        </div>
        <div>
          <SubHead><Text $size={15} $weight={500} $lh={24} $ls={0.36}>Quick Actions</Text></SubHead>
          <Stack $gap={8}>
            <Action $hover><Smartphone size={16} strokeWidth={1.700} /><Text $weight={600} $ls={0.03}>Link All UPI Sales</Text></Action>
            <Action><CreditCard size={16} /><Text $weight={600}>Link All Card Sales</Text></Action>
          </Stack>
        </div>
      </Columns>
    </Card>
  );
}

function SystemBar() {
  return (
    <Taskbar>
      <Widget>
        <svg width="38" height="36" viewBox="0 0 38 36">
          <rect x="0" y="0" width="9" height="28" rx="1" fill="#35b5ea" /><path d="M1 0v28" stroke="#176a96" strokeWidth="2" />
          <path d="M4 7h5M4 14h5M4 21h5" stroke="#155d86" strokeWidth="2" />
          <path d="M24.500 0q11 14 11 20a11 11 0 0 1-22 0q0-6 11-20z" fill="#2aa6e6" />
        </svg>
        <Bubble $left={46} $top={8} $width={25} $bg="#ff99a4" $size={16}>9</Bubble>
      </Widget>
      {tasks.map(([name, state, badge, bg], i) => (
        <TaskCell key={i} $state={state}>
          {state === "active" && <><ActiveTile $width={53} /><ActiveTile $width={60} /></>}
          {name === "ai" ? <AiTile>Ai</AiTile> : taskIcons[name]}
          {name === "whatsapp" && <Bubble $left={31} $top={9} $width={31} $bg="#f4846c" $size={16}>33</Bubble>}
          {badge && <Bubble $left={35} $top={9} $width={24} $bg={bg} $color="#fff" $size={13}>{badge}</Bubble>}
        </TaskCell>
      ))}
      <Tray>
        <svg width="16" height="12" viewBox="0 0 16 12" fill="none" stroke="#fff" strokeWidth="2"><path d="m1 10 7-8 7 8" /></svg>
        <Gap $left={28}>
          <svg width="25" height="22" viewBox="0 0 25 22">
            <path d="M5 17a5 5 0 0 1 0-10 7 7 0 0 1 14 1v9z" fill="#a5979b" /><path d="M5 18a5 5 0 0 1 1-10q5 0 8 5v5z" fill="#e2dcde" />
            <circle cx="17.500" cy="15.500" r="6.500" fill="#dc2430" /><path d="m15 13 5 5m0-5-5 5" stroke="#fff" strokeWidth="1.800" />
          </svg>
        </Gap>
        <Gap $left={22}>
          <svg width="24" height="20" viewBox="0 0 24 20" fill="none" stroke="#fff" strokeWidth="1.700"><rect x="1" y="1" width="22" height="17.500" rx="3" /><path d="M1 12h22M12 12v6" /></svg>
        </Gap>
        <Gap $left={25}>
          <svg width="24" height="18" viewBox="0 0 24 18" fill="none" stroke="#fff" strokeWidth="1.700"><path d="M1 7Q12-5 23 7M4.500 10q7.500-8 15 0M8 13.500q4-4.500 8 0" /><circle cx="12" cy="16" r="1.700" fill="#fff" stroke="none" /></svg>
        </Gap>
        <Gap $left={12}>
          <svg width="25" height="20" viewBox="0 0 25 20" fill="none" stroke="#fff" strokeWidth="1.600" strokeLinejoin="round"><path d="M1 7h4l5-5v16l-5-5H1zM14 7q2 3 0 6M17 4q4 6 0 12M20.500 1.500q6 8.500 0 17" /></svg>
        </Gap>
        <Gap $left={11}>
          <svg width="24" height="23" viewBox="0 -1 24 23" fill="none" stroke="#fff" strokeWidth="1.700"><path d="M7 3H4.500Q1.500 3 1.500 6v9q0 3 3 3h12q3 0 3-3V6q0-3-3-3H16M21 8q2 0 2 2.500T21 13" /><path d="M4.500 8h5v4h4l3-3.500V15H4.500z" fill="#fff" stroke="none" /><path d="m13-1-5 7.500h3.500L10 12l6-7.500h-3.500z" fill="#fff" stroke="#43151c" strokeWidth=".8" /></svg>
        </Gap>
        <Clock>05:59<DateLine>29-07-2025</DateLine></Clock>
      </Tray>
    </Taskbar>
  );
}

export default function App() {
  return (
    <Screen>
      <Global />
      <Browser />
      <AppArea>
        <Side />
        <Body>
          <TopBar>
            <TopLeft><Menu size={16} strokeWidth={2.200} color="#dbeafe" /><Text $color="#dbeafe" $ls={0.13}>07/29/2025</Text></TopLeft>
            <Blanks><Blank $width={84} /><Blank $width={85} /><Blank $width={122} /><Blank $width={173} /></Blanks>
            <TopIcons><Bell size={16} strokeWidth={1.700} color="#eff6ff" /><Sun size={16} strokeWidth={1.700} color="#eff6ff" /></TopIcons>
            <AdminName $weight={600} $color="#eff6ff">Admin</AdminName>
            <Avatar>A</Avatar>
          </TopBar>
          <Scroller>
            <Content><SalesCard /><ConfigCard /></Content>
            <Track $bottom={4}><Arrow /><Thumb $height={495} $top={244} /><Arrow down /></Track>
          </Scroller>
        </Body>
      </AppArea>
      <Toast>
        <Text $weight={600} $color="#fef2f2">Error</Text>
        <Text $color="#fde0e0">Failed to create bank transaction</Text>
      </Toast>
      <SystemBar />
    </Screen>
  );
}
